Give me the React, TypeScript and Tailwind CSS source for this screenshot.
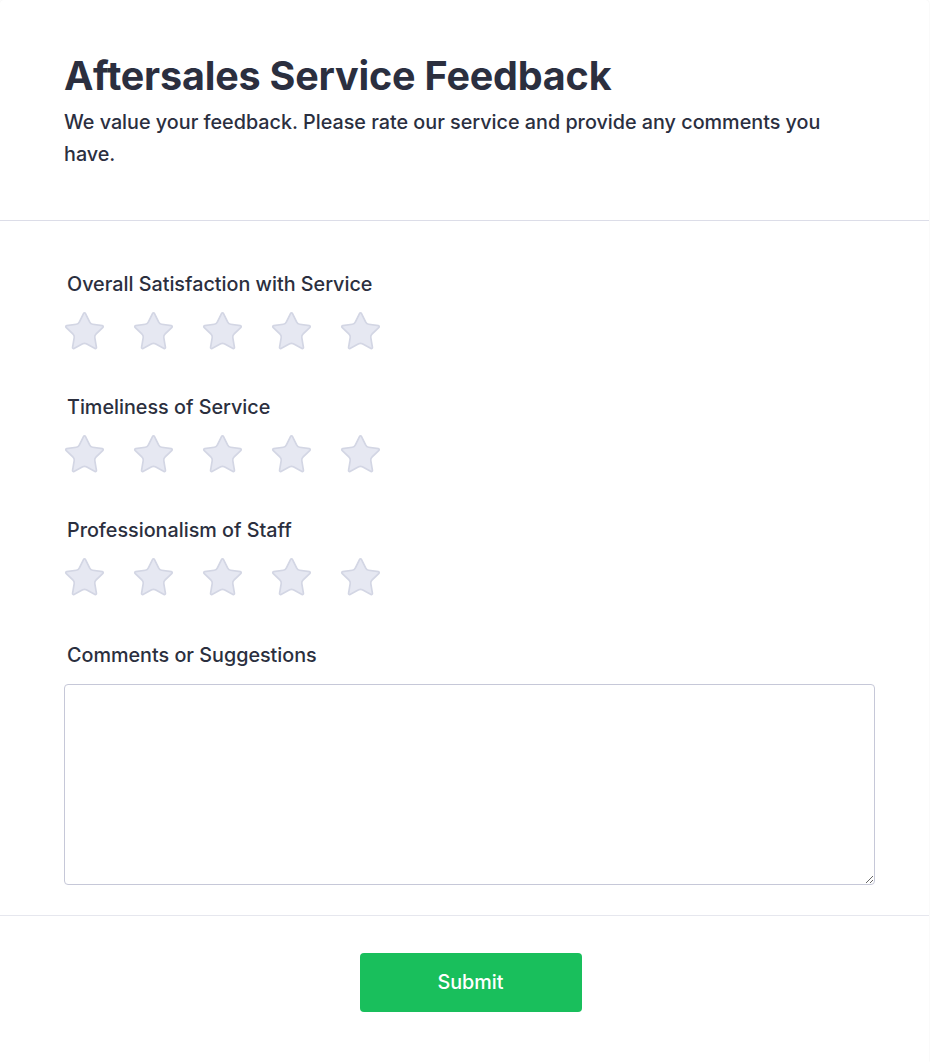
import React from "react";

const STAR =
  "M11.525 2.295a.53.53 0 0 1 .95 0l2.31 4.679a2.123 2.123 0 0 0 1.595 1.16l5.166.756a.53.53 0 0 1 .294.904l-3.736 3.638a2.123 2.123 0 0 0-.611 1.878l.882 5.14a.53.53 0 0 1-.771.56l-4.618-2.428a2.122 2.122 0 0 0-1.973 0L6.396 21.01a.53.53 0 0 1-.77-.56l.881-5.139a2.122 2.122 0 0 0-.611-1.879L2.16 9.795a.53.53 0 0 1 .294-.906l5.165-.755a2.122 2.122 0 0 0 1.597-1.16z";

function Star() {
  return (
    <svg width="45" height="45" viewBox="0 0 24 24" className="shrink-0">
      <path d={STAR} fill="#e6e8f2" stroke="#d3d6e4" strokeWidth="0.9" strokeLinejoin="round" />
    </svg>
  );
}

function Rating({ label }: { label: string }) {
  return (
    <div className="flex flex-col">
      <div className="pl-[3px] text-[19.75px] leading-[28px] font-medium text-[#2b2f3e]">{label}</div>
      <div className="mt-[11px] -ml-[2px] flex gap-[24px]">
        {[0, 1, 2, 3, 4].map((i) => (
          <Star key={i} />
        ))}
      </div>
    </div>
  );
}

export default function App() {
  return (
    <div
      className="w-[930px] h-[1062px] overflow-hidden bg-white"
      style={{ fontFamily: "Inter, 'Noto Sans', sans-serif" }}
    >
      <div className="w-[929px] min-h-[1062px] bg-white rounded-t-[4px] shadow-[0_0_2px_rgba(0,0,0,0.08)]">
        <div className="pl-16 pr-[54px] pt-[54px] pb-[50px] border-b border-[#dcdde8]">
          <h1 className="text-[39.5px] leading-[44px] font-bold text-[#2b2f3f] tracking-[-0.2px]">
            Aftersales Service Feedback
          </h1>
          <p className="mt-[8px] text-[19.75px] leading-[32px] font-medium text-[#2b2f3f]">
            We value your feedback. Please rate our service and provide any comments you have.
          </p>
        </div>
        <div className="pl-16 pr-[54px] pt-[49px] pb-[30px] border-b border-[#e6e7ee]">
          <div className="flex flex-col gap-[39px]">
            <Rating label="Overall Satisfaction with Service" />
            <Rating label="Timeliness of Service" />
            <Rating label="Professionalism of Staff" />
          </div>
          <div className="mt-[41px] flex flex-col">
            <div className="pl-[3px] text-[19.75px] leading-[28px] font-medium text-[#2b2f3e]">
              Comments or Suggestions
            </div>
            <textarea className="mt-[15px] block w-full h-[201px] rounded-[4px] border border-[#c6c8d8] bg-white outline-none resize-y" />
          </div>
        </div>
        <div className="pl-[66px] pr-[54px] pt-[37px] flex justify-center">
          <button className="w-[222px] h-[59px] rounded-[4px] bg-[#19bf5c] text-white text-[19.75px] font-medium">
            Submit
          </button>
        </div>
      </div>
    </div>
  );
}
